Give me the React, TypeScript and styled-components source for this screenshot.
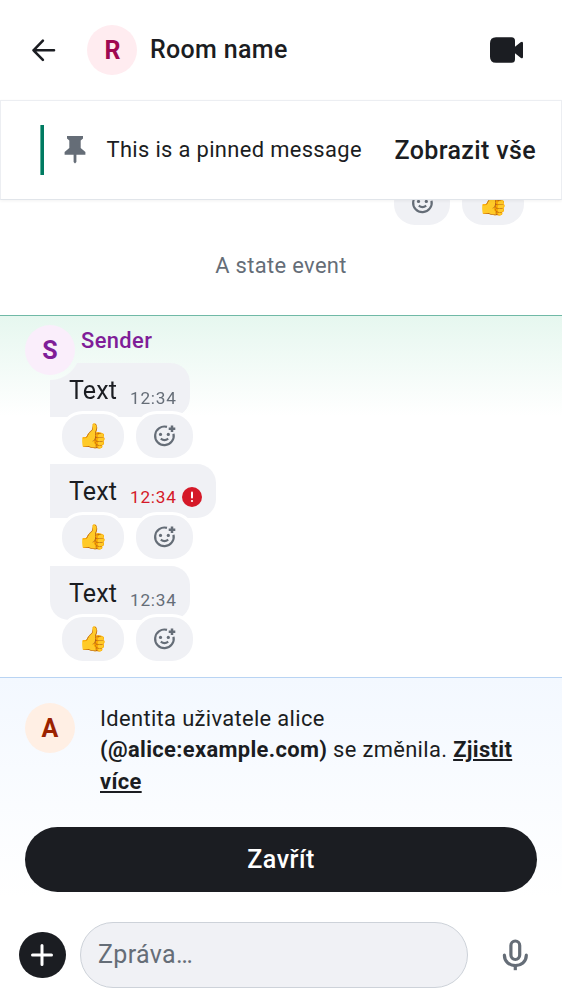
import React from 'react';
import styled, { createGlobalStyle, css } from 'styled-components';

const Global = createGlobalStyle`
  * { box-sizing: border-box; }
  html, body, #root { margin: 0; height: 100%; }
  body { background: #fff; color: #1b1d22; font-family: Roboto, "Noto Sans", sans-serif; overflow: hidden; }
  button { font: inherit; color: inherit; border: 0; padding: 0; background: none; }
  svg { display: block; flex: none; }
`;

const Screen = styled.main`
  width: 562px;
  height: 1000px;
  display: flex;
  flex-direction: column;
  overflow: hidden;
`;

const TopBar = styled.header`
  height: 100px;
  flex: none;
  display: flex;
  align-items: center;
  padding: 0 38px 0 25px;
`;

const IconButton = styled.button`
  width: 37px;
  height: 37px;
  display: grid;
  place-items: center;
`;

const Avatar = styled.div<{ $bg: string; $fg: string }>`
  width: 50px;
  height: 50px;
  flex: none;
  border-radius: 50%;
  background: ${p => p.$bg};
  color: ${p => p.$fg};
  font-size: 25px;
  font-weight: 700;
  line-height: 51px;
  text-align: center;
`;

const RoomAvatar = styled(Avatar)`
  margin-left: 25.4px;
`;

const RoomName = styled.h1`
  margin: 0 auto 0 12.6px;
  font-size: 25px;
  font-weight: 500;
  letter-spacing: 0.34px;
  line-height: 36px;
`;

const PinnedBanner = styled.section`
  height: 100px;
  flex: none;
  display: flex;
  align-items: center;
  padding: 0 25px 0 39px;
  border: 1px solid #eceef2;
  border-bottom-color: #e1e5ea;
  background: #fff;
  box-shadow: 0 1px 3px rgba(27, 29, 34, 0.06);
  position: relative;
  z-index: 2;
`;

const PinBar = styled.span`
  width: 4px;
  height: 50px;
  margin-right: 20px;
  background: linear-gradient(90deg, #5fb39d 0 1px, #007a61 1px);
`;

const PinText = styled.span`
  margin: 0 0 1px 20.5px;
  font-size: 21.9px;
  letter-spacing: 0.35px;
  white-space: nowrap;
`;

const ViewAll = styled.button`
  margin: 0 0 0 auto;
  font-size: 25px;
  font-weight: 500;
  letter-spacing: 0.37px;
  white-space: nowrap;
`;

const Timeline = styled.section`
  height: 477px;
  flex: none;
  display: flex;
  flex-direction: column;
`;

/* Stacked above the masked bubble so that the pills' white rings cut into it. */
const Reactions = styled.div<{ $end?: boolean }>`
  position: relative;
  z-index: 1;
  display: flex;
  gap: 6px;
  ${p => p.$end
    ? css`justify-content: flex-end; padding-right: 35px; margin-top: -22px;`
    : css`padding-left: 59px; margin-top: -6px;`}
`;

const Pill = styled.span<{ $wide?: boolean }>`
  width: ${p => (p.$wide ? 68 : 62.5)}px;
  height: 50px;
  border: 3px solid #fff;
  border-radius: 24px;
  display: grid;
  place-items: center;
  background: #f0f1f5;
`;

const StateEvent = styled.p`
  margin: 21px 0 0;
  height: 33px;
  line-height: 33px;
  text-align: center;
  font-size: 21.9px;
  letter-spacing: 0.35px;
  color: #656d77;
`;

const Focused = styled.div`
  margin-top: 33px;
  height: 362px;
  border-top: 1px solid #70b9a6;
  background: linear-gradient(#e6f7ef 0, #fff 100px);
`;

const SenderRow = styled.div`
  height: 47px;
  display: flex;
  padding: 9px 25px 0;
`;

const SenderName = styled.span`
  margin-left: 6px;
  font-size: 21.9px;
  font-weight: 500;
  line-height: 31px;
  letter-spacing: 0.38px;
  color: #7f1d98;
`;

const Message = styled.article`
  display: flex;
  flex-direction: column;
  align-items: flex-start;
  height: 101.4px;
`;

const Bubble = styled.div<{ $first?: boolean; $last?: boolean }>`
  height: 54px;
  margin-left: 50px;
  padding: 0 13px 0 19px;
  display: flex;
  gap: 13px;
  background: #f0f1f5;
  border-radius: 0 19px 19px ${p => (p.$last ? 19 : 0)}px;
  ${p => p.$first && css`
    mask-image: radial-gradient(circle at 0 -13px, transparent 29.5px, #000 30.5px);
  `}
`;

const Body = styled.span`
  font-size: 25px;
  line-height: 55px;
  letter-spacing: 0.1px;
`;

const Time = styled.span<{ $error?: boolean }>`
  display: flex;
  align-items: center;
  gap: 5px;
  padding-top: ${p => (p.$error ? 11 : 15)}px;
  padding-right: ${p => (p.$error ? 1 : 0)}px;
  font-size: 17.2px;
  letter-spacing: 0.8px;
  color: ${p => (p.$error ? '#d51928' : '#656d77')};
`;

const Notice = styled.section`
  height: 235px;
  flex: none;
  display: flex;
  flex-direction: column;
  padding: 25px 25px 0;
  border-top: 1px solid #b9d4f3;
  background: linear-gradient(#f3f8ff, #fff 220px);
`;

const NoticeRow = styled.div`
  height: 124px;
  display: flex;
  gap: 25px;
`;

const NoticeText = styled.p`
  margin: 0;
  font-size: 21.9px;
  line-height: 31.4px;
  letter-spacing: 0.35px;
`;

const Dismiss = styled.button`
  height: 65px;
  border-radius: 33px;
  background: #1b1d22;
  color: #fff;
  font-size: 25px;
  font-weight: 500;
  letter-spacing: 0.5px;
`;

const Composer = styled.footer`
  display: flex;
  align-items: center;
  padding: 10px 28px 0 19px;
`;

const AddButton = styled.button`
  width: 46.5px;
  height: 46.5px;
  border-radius: 50%;
  display: grid;
  place-items: center;
  background: #1b1d22;
`;

const Field = styled.div`
  width: 388.5px;
  height: 65.5px;
  margin: 0 auto 0 14px;
  padding-left: 17.5px;
  border: 1px solid #cdd2d9;
  border-radius: 33px;
  background: #f0f1f5;
  color: #656d77;
  font-size: 25px;
  line-height: 63px;
  letter-spacing: 0.35px;
`;

const BackIcon = () => (
  <svg width="37" height="37" viewBox="0 0 37 37" fill="none" stroke="#1b1d22" strokeWidth="2.600" strokeLinecap="round" strokeLinejoin="round">
    <path d="M29 18.300H8.500M17.900 8.700L8.500 18.300l9.400 9.600" />
  </svg>
);

const VideoIcon = () => (
  <svg width="34" height="26" viewBox="0 0 34 26" fill="#1b1d22">
    <path d="M6 .3h15.500q3.500 0 3.500 3.500v6l5.600-4.600q2.400-1.500 2.400 1v13.600q0 2.500-2.400 1L25 16.200v6q0 3.500-3.500 3.500H6q-6 0-6-6V6.300q0-6 6-6Z" />
  </svg>
);

const PinIcon = () => (
  <svg width="22" height="28" viewBox="0 0 22 28" fill="#656d77">
    <path d="M3 0h16v2.600l-2.300 2V12l4.700 4v2.700h-9V26l-1.400 1.600L9.600 26v-7.300h-9V16l4.700-4V4.600L3 2.600Z" />
  </svg>
);

const SmileIcon = () => (
  <svg width="24" height="24" viewBox="0 0 24 24" fill="none" stroke="#656d77" strokeWidth="2.200">
    <path d="M15 2.900A9.300 9.300 0 1 0 21.500 9.800" />
    <path d="M8.800 14.700q3.700 2.900 7.400 0" />
    <path d="M20 1.400v6.600M16.700 4.700h6.600" strokeWidth="2.500" />
    <circle cx="8.500" cy="10.400" r="1.600" fill="#656d77" stroke="none" />
    <circle cx="16.300" cy="10.400" r="1.600" fill="#656d77" stroke="none" />
  </svg>
);

const Thumb = styled.span`
  font-family: "Noto Color Emoji", Roboto, sans-serif;
  font-size: 24px;
  line-height: 32px;
`;

const ErrorIcon = () => (
  <svg width="20" height="20" viewBox="0 0 20 20">
    <circle cx="10" cy="10" r="10" fill="#d51928" />
    <path d="M10 5.500v5" stroke="#fff" strokeWidth="2" strokeLinecap="round" />
    <circle cx="10" cy="14" r="1.100" fill="#fff" />
  </svg>
);

const PlusIcon = () => (
  <svg width="22" height="22" viewBox="0 0 22 22" stroke="#fff" strokeWidth="3" strokeLinecap="round">
    <path d="M11 1.500v19M1.500 11h19" />
  </svg>
);

const MicIcon = () => (
  <svg width="38" height="38" viewBox="0 0 38 38" fill="none" stroke="#656d77" strokeWidth="3.200" strokeLinecap="round">
    <rect x="14.900" y="5" width="8.800" height="18.500" rx="4.400" />
    <path d="M8.400 19.200C8.400 33 30.300 33 30.300 19.200" />
    <path d="M19.300 30v4.200" strokeLinecap="butt" />
  </svg>
);

const MessageItem = ({ error, first, last }: { error?: boolean; first?: boolean; last?: boolean }) => (
  <Message>
    <Bubble $first={first} $last={last}>
      <Body>Text</Body>
      <Time $error={error}>12:34{error && <ErrorIcon />}</Time>
    </Bubble>
    <Reactions>
      <Pill $wide><Thumb>👍</Thumb></Pill>
      <Pill><SmileIcon /></Pill>
    </Reactions>
  </Message>
);

export default function App() {
  return (
    <>
      <Global />
      <Screen>
        <TopBar>
          <IconButton aria-label="Zpět"><BackIcon /></IconButton>
          <RoomAvatar $bg="#ffecf0" $fg="#9f0850">R</RoomAvatar>
          <RoomName>Room name</RoomName>
          <VideoIcon />
        </TopBar>
        <PinnedBanner>
          <PinBar />
          <PinIcon />
          <PinText>This is a pinned message</PinText>
          <ViewAll>Zobrazit vše</ViewAll>
        </PinnedBanner>
        <Timeline>
          <Reactions $end>
            <Pill><SmileIcon /></Pill>
            <Pill $wide><Thumb>👍</Thumb></Pill>
          </Reactions>
          <StateEvent>A state event</StateEvent>
          <Focused>
            <SenderRow>
              <Avatar $bg="#faeefb" $fg="#7f1d98">S</Avatar>
              <SenderName>Sender</SenderName>
            </SenderRow>
            <MessageItem first />
            <MessageItem error />
            <MessageItem last />
          </Focused>
        </Timeline>
        <Notice>
          <NoticeRow>
            <Avatar $bg="#ffefe4" $fg="#9b2200">A</Avatar>
            <NoticeText>
              Identita uživatele alice <b>(@alice:example.com)</b> se změnila. <b><u>Zjistit více</u></b>
            </NoticeText>
          </NoticeRow>
          <Dismiss>Zavřít</Dismiss>
        </Notice>
        <Composer>
          <AddButton aria-label="Přidat"><PlusIcon /></AddButton>
          <Field>Zpráva…</Field>
          <MicIcon />
        </Composer>
      </Screen>
    </>
  );
}
